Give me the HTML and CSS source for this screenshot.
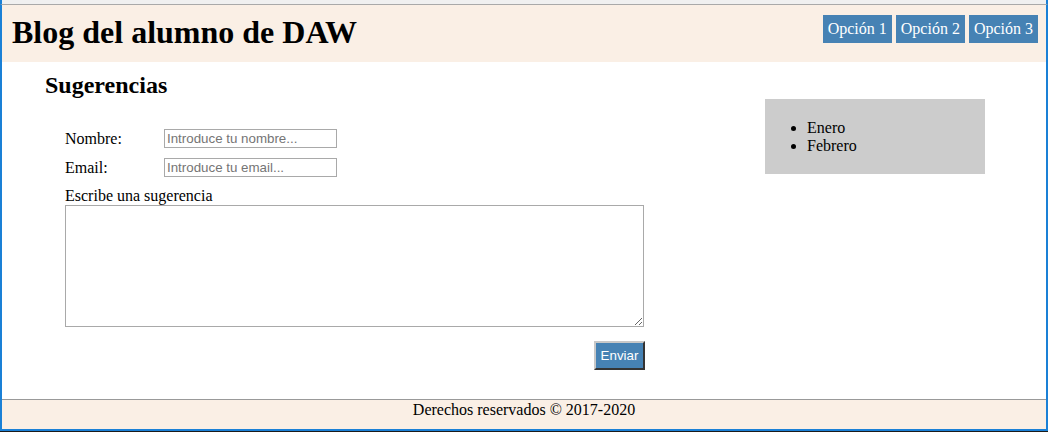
FILE: index.html
```html
<!DOCTYPE html>
<html lang="es">
<head>
<meta charset="utf-8">
<title>Blog del alumno de DAW</title>
<link rel="stylesheet" href="styles.css">
</head>
<body>
<div class="chrome-top"></div>
<div class="window">
  <header class="site-header">
    <h1 class="site-title">Blog del alumno de DAW</h1>
    <nav class="site-nav">
      <a class="nav-btn" href="#">Opción 1</a>
      <a class="nav-btn" href="#">Opción 2</a>
      <a class="nav-btn" href="#">Opción 3</a>
    </nav>
  </header>
  <main class="main">
    <section class="content">
      <h2 class="section-title">Sugerencias</h2>
      <form class="form">
        <div class="field-grid">
          <label class="field-label" for="nombre">Nombre:</label>
          <input class="field-input" id="nombre" type="text" placeholder="Introduce tu nombre...">
          <label class="field-label" for="email">Email:</label>
          <input class="field-input" id="email" type="email" placeholder="Introduce tu email...">
        </div>
        <label class="area-label" for="sug">Escribe una sugerencia</label>
        <textarea class="area" id="sug"></textarea>
        <div class="actions">
          <button class="submit" type="button">Enviar</button>
        </div>
      </form>
    </section>
    <aside class="sidebar">
      <ul class="months">
        <li>Enero</li>
        <li>Febrero</li>
      </ul>
    </aside>
  </main>
  <footer class="site-footer">Derechos reservados © 2017-2020</footer>
</div>
<div class="chrome-bottom"></div>
</body>
</html>
```

FILE: styles.css
```css
* { box-sizing: border-box; }

html, body {
  margin: 0;
  padding: 0;
  height: 432px;
  overflow: hidden;
}

body {
  display: flex;
  flex-direction: column;
  font-family: "Liberation Serif", "Times New Roman", serif;
  font-size: 16px;
  color: #000;
  background: #fff;
}

.chrome-top {
  height: 5px;
  background: #f0f0f0;
  border-bottom: 1px solid #a9a9a9;
  border-left: 2px solid #1a80d6;
  border-right: 2px solid #1a80d6;
}

.window {
  flex: 1;
  display: flex;
  flex-direction: column;
  border-left: 2px solid #1a80d6;
  border-right: 2px solid #1a80d6;
  border-bottom: 2px solid #1a80d6;
}

.chrome-bottom {
  height: 1px;
  background: #1b1b1b;
}

.site-header {
  display: flex;
  justify-content: space-between;
  align-items: flex-start;
  background: #faefe5;
  padding: 9px 8px 11px 10px;
}

.site-title {
  margin: 0;
  font-size: 32px;
  font-weight: bold;
}

.site-nav {
  display: flex;
  gap: 4px;
  margin-top: 1px;
}

.nav-btn {
  display: block;
  background: #4682b4;
  color: #fff;
  text-decoration: none;
  padding: 5px;
  font-size: 16px;
}

.main {
  flex: 1;
  display: flex;
  justify-content: space-between;
  align-items: flex-start;
}

.content {
  padding: 10px 0 0 43px;
  width: 602px;
}

.section-title {
  margin: 0;
  font-size: 24px;
  font-weight: bold;
}

.form {
  margin: 30px 0 0 20px;
  width: 580px;
  display: flex;
  flex-direction: column;
}

.field-grid {
  display: grid;
  grid-template-columns: 99px 173px;
  row-gap: 10px;
  align-items: center;
}

.field-input {
  width: 173px;
  height: 19px;
  margin: 0;
  padding: 1px 2px;
  border: 1px solid #a9a9a9;
  font-family: "Liberation Sans", Arial, sans-serif;
  font-size: 13.33px;
}

.field-input::placeholder {
  color: #757575;
}

.area-label {
  margin-top: 10px;
  line-height: 18px;
}

.area {
  width: 579px;
  height: 122px;
  margin: 0;
  border: 1px solid #a9a9a9;
  font-family: "Liberation Mono", monospace;
  font-size: 13.33px;
}

.actions {
  display: flex;
  justify-content: flex-end;
  margin-top: 14px;
}

.submit {
  width: 51px;
  height: 29px;
  background: #4682b4;
  color: #fff;
  font-family: "Liberation Sans", Arial, sans-serif;
  font-size: 13.33px;
  padding: 0;
  border: 2px outset #c8c8c8;
  border-right-color: #888;
  border-bottom-color: #888;
  margin-right: 0;
}

.sidebar {
  width: 220px;
  margin: 37px 61px 0 0;
  background: #cccccc;
  padding: 4px 2px 3px;
}

.months {
  margin: 16px 0;
  padding-left: 40px;
  line-height: 18px;
}

.site-footer {
  border-top: 1px solid #999;
  background: #faefe5;
  text-align: center;
  padding: 1px 0 10px;
  height: 30px;
}
```
